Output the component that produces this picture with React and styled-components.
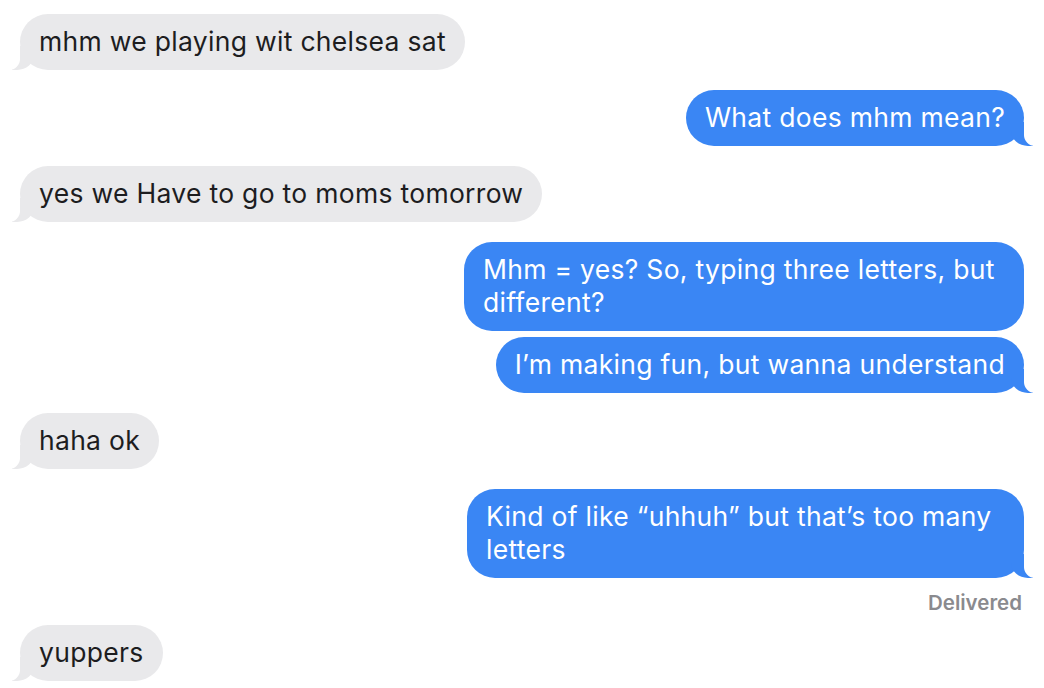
import React from "react";
import styled, { createGlobalStyle, css } from "styled-components";

const GlobalStyle = createGlobalStyle`
  html, body {
    margin: 0;
    padding: 0;
    background: #ffffff;
  }
  body {
    font-family: Inter, "Noto Sans", "Liberation Sans", sans-serif;
    -webkit-font-smoothing: antialiased;
  }
`;

const BLUE = "#3a86f4";
const GRAY = "#e9e9eb";

const messages = [
  { id: 1, me: false, text: "mhm we playing wit chelsea sat", tail: true },
  { id: 2, me: true, text: "What does mhm mean?", tail: true },
  { id: 3, me: false, text: "yes we Have to go to moms tomorrow", tail: true },
  { id: 4, me: true, text: "Mhm = yes? So, typing three letters, but different?", tail: false, width: 560 },
  { id: 5, me: true, text: "I\u2019m making fun, but wanna understand", tail: true },
  { id: 6, me: false, text: "haha ok", tail: true },
  { id: 7, me: true, text: "Kind of like \u201cuhhuh\u201d but that\u2019s too many letters", tail: true, width: 557, status: "Delivered" },
  { id: 8, me: false, text: "yuppers", tail: true },
];

const Thread = styled.div`
  width: 1044px;
  height: 688px;
  box-sizing: border-box;
  padding: 14px 20px 0 20px;
  display: flex;
  flex-direction: column;
  overflow: hidden;
`;

const Row = styled.div`
  display: flex;
  flex-direction: column;
  align-items: ${(p) => (p.$me ? "flex-end" : "flex-start")};
  margin-top: ${(p) => p.$gap}px;
`;

const tailCss = css`
  &::before,
  &::after {
    content: "";
    position: absolute;
    bottom: 0;
    height: 24px;
  }
  &::before {
    width: 22px;
    background: ${(p) => (p.$me ? BLUE : GRAY)};
    ${(p) =>
      p.$me
        ? css`
            right: -9px;
            border-bottom-left-radius: 17px 15px;
          `
        : css`
            left: -8px;
            border-bottom-right-radius: 17px 15px;
          `}
  }
  &::after {
    width: 26px;
    background: #ffffff;
    ${(p) =>
      p.$me
        ? css`
            right: -26px;
            border-bottom-left-radius: 11px;
          `
        : css`
            left: -26px;
            border-bottom-right-radius: 11px;
          `}
  }
`;

const Bubble = styled.div`
  position: relative;
  box-sizing: border-box;
  max-width: ${(p) => (p.$width ? `${p.$width}px` : "640px")};
  padding: 11px 19px 12px 19px;
  border-radius: 28px;
  font-size: 26.5px;
  line-height: 33px;
  letter-spacing: 0.3px;
  background: ${(p) => (p.$me ? BLUE : GRAY)};
  color: ${(p) => (p.$me ? "#ffffff" : "#1d1d1f")};
  ${(p) => p.$tail && tailCss}
`;

const Status = styled.div`
  margin-top: 12px;
  margin-right: 2px;
  font-size: 20.5px;
  line-height: 25px;
  font-weight: 600;
  color: #8a8a8e;
`;

const gapFor = (prev, m) => {
  if (!prev) return 0;
  if (prev.status) return 10;
  return prev.me === m.me ? 6 : 20;
};

export default function App() {
  return (
    <>
      <GlobalStyle />
      <Thread>
        {messages.map((m, i) => (
          <Row key={m.id} $me={m.me} $gap={gapFor(messages[i - 1], m)}>
            <Bubble $me={m.me} $tail={m.tail} $width={m.width}>
              {m.text}
            </Bubble>
            {m.status && <Status>{m.status}</Status>}
          </Row>
        ))}
      </Thread>
    </>
  );
}
